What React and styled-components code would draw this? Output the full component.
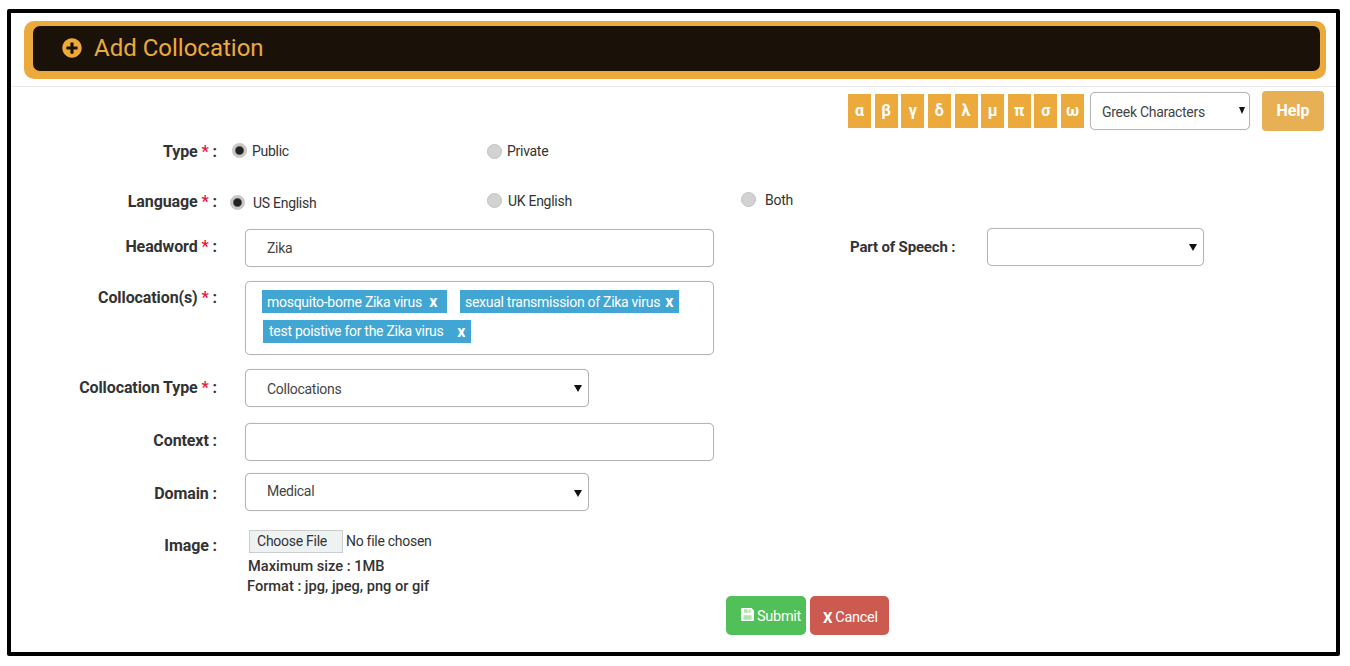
import React from 'react'
import styled, { createGlobalStyle } from 'styled-components'
import { FaPlusCircle } from 'react-icons/fa'

const GlobalStyle = createGlobalStyle`
    * { box-sizing: border-box; }
    html, body { margin: 0; background: #fff; }
    body {
        font-family: Roboto, "Noto Sans", sans-serif;
        font-size: 14px;
        letter-spacing: -0.28px;
        color: #333;
    }
`;

const Frame = styled.div`
    margin: 9px 10px 0 7px;
    height: 647px;
    border: 4px solid #000;
    border-radius: 2px;
    overflow: hidden;
`;

const HeaderBar = styled.header`
    margin: 8px 10px 0 13px;
    height: 58px;
    padding: 5px 6px 8px 9px;
    background: #eca93c;
    border-radius: 10px;
`;

const HeaderInner = styled.div`
    height: 100%;
    display: flex;
    align-items: center;
    gap: 12px;
    padding-left: 29px;
    background: #1a1208;
    border-radius: 7px;
    color: #eca93c;
`;

const PlusIcon = styled(FaPlusCircle)`
    margin-bottom: 2px;
`;

const Title = styled.h1`
    margin: 0;
    padding-bottom: 2px;
    font-size: 24px;
    font-weight: 400;
    line-height: 1;
    letter-spacing: 0;
`;

const Divider = styled.hr`
    margin: 7px 0 0;
    height: 1px;
    border: 0;
    background: #e6e6e6;
`;

const Toolbar = styled.div`
    display: flex;
    justify-content: flex-end;
    align-items: center;
    height: 40px;
    margin-top: 4px;
    padding-right: 12px;
`;

const GreekGroup = styled.div`
    display: flex;
    gap: 3.625px;
    margin-right: 6px;
`;

const GreekButton = styled.button`
    width: 23px;
    height: 34px;
    padding: 0 0 2px;
    border: 0;
    background: #eca93c;
    color: #fff;
    font-family: inherit;
    font-size: 16px;
    font-weight: 700;
`;

const HelpButton = styled.button`
    width: 62px;
    height: 40px;
    margin-left: 12px;
    padding: 0 0 2px;
    border: 0;
    border-radius: 4px;
    background: #e8b055;
    color: #fff;
    font-family: inherit;
    font-size: 16px;
    font-weight: 700;
`;

const Row = styled.div`
    display: flex;
    align-items: flex-start;
    height: ${p => p.$height}px;
    margin-top: ${p => p.$top}px;
`;

const Label = styled.label`
    flex: none;
    width: 206px;
    padding-top: ${p => p.$pt || 0}px;
    text-align: right;
    font-size: 16px;
    font-weight: 700;
    line-height: 20px;
    letter-spacing: -0.1px;
    color: #333;
`;

const SideLabel = styled(Label)`
    width: auto;
    margin-left: 136px;
    font-size: 15px;
    letter-spacing: -0.16px;
`;

const Star = styled.span`
    color: #f0143c;
`;

const RadioRow = styled.div`
    display: flex;
    height: 20px;
    margin-left: ${p => p.$left}px;
`;

const RadioOption = styled.label`
    display: flex;
    align-items: center;
    gap: ${p => p.$gap}px;
    width: ${p => p.$width}px;
    font-size: 14px;
    color: #333;
`;

const RadioInput = styled.input.attrs({ type: 'radio' })`
    flex: none;
    appearance: none;
    width: 15px;
    height: 15px;
    margin: ${p => (p.$shift > 0 ? p.$shift * 2 : 0)}px 0 ${p => (p.$shift < 0 ? -p.$shift * 2 : 0)}px;
    border: 1px solid #c2c2c2;
    border-radius: 50%;
    background: #d2d2d2;
    &:checked {
        background: radial-gradient(circle, #222 0 3.5px, #c9c9c9 5px);
    }
`;

const RadioText = styled.span`
    padding: ${p => (p.$shift > 0 ? p.$shift * 2 : 0)}px 0 ${p => (p.$shift < 0 ? -p.$shift * 2 : 0)}px;
`;

const TextField = styled.input`
    flex: none;
    width: 469px;
    height: 38px;
    margin-left: 28px;
    padding: 0 21px;
    border: 1px solid #b5b5b5;
    border-radius: 5px;
    box-shadow: 0 0 1px #c8c8c8;
    font-family: inherit;
    font-size: 14px;
    letter-spacing: inherit;
    color: #444;
    outline: none;
`;

const TagBox = styled.div`
    width: 469px;
    height: 74px;
    margin-left: 28px;
    padding: 8px 16px 0;
    display: flex;
    flex-wrap: wrap;
    align-content: flex-start;
    gap: 7px 13px;
    border: 1px solid #b5b5b5;
    border-radius: 5px;
    box-shadow: 0 0 1px #c8c8c8;
`;

const Tag = styled.span`
    display: flex;
    justify-content: space-between;
    align-items: center;
    width: ${p => p.$width}px;
    height: 23px;
    margin-left: ${p => p.$left || 0}px;
    padding: 0 ${p => p.$pr}px 0 ${p => p.$pl}px;
    background: #41a6d4;
    color: #fff;
    font-size: 14px;
    white-space: nowrap;
`;

const TagText = styled.span`
    padding-bottom: ${p => p.$lift || 0}px;
`;

const TagClose = styled.b`
    font-size: 16px;
    line-height: 1;
`;

const SelectWrap = styled.div`
    flex: none;
    position: relative;
    width: ${p => p.$width}px;
    height: 38px;
    margin-top: ${p => p.$mt || 0}px;
    margin-left: ${p => p.$ml || 0}px;
    &::after {
        content: '';
        position: absolute;
        top: ${p => p.$arrow || 16}px;
        right: ${p => (p.$small ? 5 : 7)}px;
        border-left: ${p => (p.$small ? 3.5 : 4.5)}px solid transparent;
        border-right: ${p => (p.$small ? 3.5 : 4.5)}px solid transparent;
        border-top: 7px solid #111;
        pointer-events: none;
    }
`;

const Select = styled.select`
    appearance: none;
    display: block;
    width: 100%;
    height: 100%;
    padding: ${p => (p.$nudge > 0 ? 2 : 0)}px 20px ${p => (p.$nudge < 0 ? 2 : 0)}px ${p => p.$pad}px;
    border: 1px solid #b5b5b5;
    border-radius: 5px;
    box-shadow: 0 0 1px #c8c8c8;
    background: #fff;
    font-family: inherit;
    font-size: 14px;
    letter-spacing: inherit;
    color: #444;
    outline: none;
`;

const ImageColumn = styled.div`
    margin-left: 28px;
`;

const FileInput = styled.input.attrs({ type: 'file' })`
    display: block;
    margin-left: 4px;
    height: 23px;
    font-family: inherit;
    font-size: 14px;
    letter-spacing: inherit;
    color: #333;
    &::file-selector-button {
        width: 94px;
        height: 23px;
        margin-right: 3px;
        padding: 0 8px 2px 0;
        border: 1px solid #ccc;
        background: #eff2f3;
        color: #333;
        font-family: inherit;
        font-size: 14px;
        letter-spacing: inherit;
    }
`;

const Hint = styled.div`
    margin-left: ${p => p.$indent}px;
    margin-top: ${p => p.$top || 0}px;
    font-size: 14.6px;
    font-weight: 500;
    line-height: 20px;
    letter-spacing: 0;
    color: #333;
`;

const Actions = styled.div`
    display: flex;
    gap: 4px;
    margin-left: 715px;
`;

const ActionButton = styled.button`
    display: flex;
    align-items: center;
    gap: 3px;
    width: ${p => p.$width}px;
    height: 39px;
    padding: ${p => p.$pt}px 0 0 ${p => p.$pl}px;
    border: 0;
    border-radius: 5px;
    background: ${p => p.$bg};
    color: #fff;
    font-family: inherit;
    font-size: 14.5px;
    letter-spacing: inherit;
`;

const SaveSvg = styled.svg`
    width: 13px;
    height: 13px;
    margin-bottom: 4px;
`;

const CancelMark = styled.b`
    font-size: 15px;
`;

const greek = ['α', 'β', 'γ', 'δ', 'λ', 'μ', 'π', 'σ', 'ω']

function Required() {
    return <> <Star>*</Star> :</>
}

function SaveIcon() {
    return (
        <SaveSvg viewBox="0 0 13 13" aria-hidden="true">
            <rect x="1" y="1" width="11" height="11" fill="#fff" opacity="0.55" />
            <path
                fill="#fff"
                fillRule="evenodd"
                d="M0 1a1 1 0 0 1 1-1h9.5L13 2.5V12a1 1 0 0 1-1 1H1a1 1 0 0 1-1-1z M3 1.2v3.6h6.5V1.2h-1.6v2.4H6.6V1.2z M2.4 7.2v4.6h8.2V7.2z"
            />
        </SaveSvg>
    )
}

export default function App() {
    return (
        <>
            <GlobalStyle />
            <Frame>
                <HeaderBar>
                    <HeaderInner>
                        <PlusIcon size={20} />
                        <Title>Add Collocation</Title>
                    </HeaderInner>
                </HeaderBar>
                <Divider />

                <Toolbar>
                    <GreekGroup>
                        {greek.map(ch => <GreekButton key={ch}>{ch}</GreekButton>)}
                    </GreekGroup>
                    <SelectWrap $width={160} $arrow={15} $small>
                        <Select $pad={11} $nudge={1} defaultValue="Greek Characters">
                            <option>Greek Characters</option>
                        </Select>
                    </SelectWrap>
                    <HelpButton>Help</HelpButton>
                </Toolbar>

                <Row $top={10} $height={20}>
                    <Label $pt={1}>Type<Required /></Label>
                    <RadioRow $left={15}>
                        <RadioOption $gap={5} $width={255}>
                            <RadioInput name="type" defaultChecked $shift={-1} />
                            <RadioText>Public</RadioText>
                        </RadioOption>
                        <RadioOption $gap={5} $width={255}>
                            <RadioInput name="type" />
                            <RadioText>Private</RadioText>
                        </RadioOption>
                    </RadioRow>
                </Row>

                <Row $top={30} $height={20}>
                    <Label $pt={1}>Language<Required /></Label>
                    <RadioRow $left={13}>
                        <RadioOption $gap={8} $width={257}>
                            <RadioInput name="language" defaultChecked $shift={1} />
                            <RadioText $shift={2}>US English</RadioText>
                        </RadioOption>
                        <RadioOption $gap={6} $width={254}>
                            <RadioInput name="language" $shift={-1} />
                            <RadioText>UK English</RadioText>
                        </RadioOption>
                        <RadioOption $gap={9} $width={80}>
                            <RadioInput name="language" $shift={-2} />
                            <RadioText $shift={-1}>Both</RadioText>
                        </RadioOption>
                    </RadioRow>
                </Row>

                <Row $top={18} $height={38}>
                    <Label $pt={8}>Headword<Required /></Label>
                    <TextField defaultValue="Zika" />
                    <SideLabel $pt={8}>Part of Speech :</SideLabel>
                    <SelectWrap $width={217} $mt={-1} $ml={32}>
                        <Select $pad={11} defaultValue="">
                            <option value=""></option>
                        </Select>
                    </SelectWrap>
                </Row>

                <Row $top={14} $height={74}>
                    <Label $pt={7}>Collocation(s)<Required /></Label>
                    <TagBox>
                        <Tag $width={185} $pl={5} $pr={10}><TagText>mosquito-borne Zika virus</TagText> <TagClose>x</TagClose></Tag>
                        <Tag $width={219} $pl={5} $pr={6}><TagText>sexual transmission of Zika virus</TagText> <TagClose>x</TagClose></Tag>
                        <Tag $width={208} $pl={6} $pr={6} $left={1}><TagText $lift={2}>test poistive for the Zika virus</TagText> <TagClose>x</TagClose></Tag>
                    </TagBox>
                </Row>

                <Row $top={14} $height={38}>
                    <Label $pt={9}>Collocation Type<Required /></Label>
                    <SelectWrap $width={344} $ml={28}>
                        <Select $pad={21} $nudge={1} defaultValue="Collocations">
                            <option>Collocations</option>
                        </Select>
                    </SelectWrap>
                </Row>

                <Row $top={16} $height={38}>
                    <Label $pt={8}>Context :</Label>
                    <TextField />
                </Row>

                <Row $top={12} $height={38}>
                    <Label $pt={11}>Domain :</Label>
                    <SelectWrap $width={344} $ml={28} $arrow={17}>
                        <Select $pad={21} $nudge={-1} defaultValue="Medical">
                            <option>Medical</option>
                        </Select>
                    </SelectWrap>
                </Row>

                <Row $top={19} $height={66}>
                    <Label $pt={6}>Image :</Label>
                    <ImageColumn>
                        <FileInput />
                        <Hint $indent={3} $top={3}>Maximum size : 1MB</Hint>
                        <Hint $indent={2}>Format : jpg, jpeg, png or gif</Hint>
                    </ImageColumn>
                </Row>

                <Actions>
                    <ActionButton $width={80} $bg="#51c058" $pl={15} $pt={2}><SaveIcon />Submit</ActionButton>
                    <ActionButton $width={79} $bg="#cd5a50" $pl={13} $pt={4}><CancelMark>X</CancelMark>Cancel</ActionButton>
                </Actions>
            </Frame>
        </>
    )
}
